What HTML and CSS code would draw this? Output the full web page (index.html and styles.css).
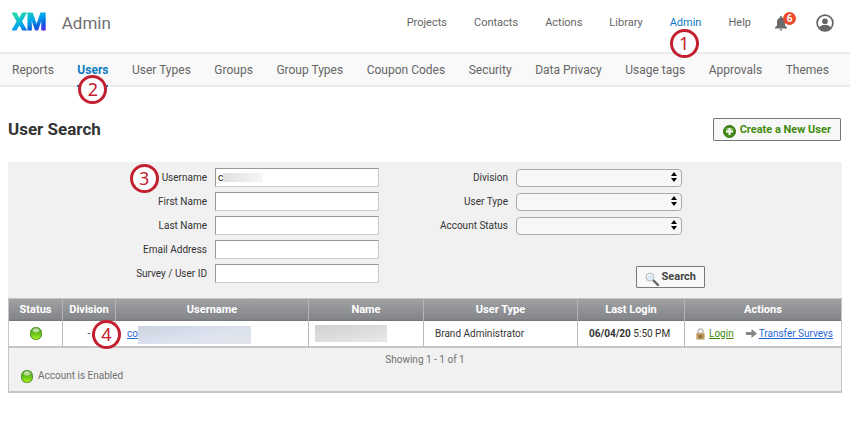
FILE: index.html
```html
<!DOCTYPE html>
<html lang="en">
<head>
<meta charset="utf-8">
<meta name="viewport" content="width=device-width, initial-scale=1">
<title>Admin - User Search</title>
<link rel="stylesheet" href="styles.css">
</head>
<body>
<svg class="defs" width="0" height="0" aria-hidden="true">
  <linearGradient id="lamp" x1="0" y1="0" x2="0" y2="1"><stop offset="0" stop-color="#8fbf70"/><stop offset=".4" stop-color="#5cb51a"/><stop offset="1" stop-color="#a6f51a"/></linearGradient>
</svg>
<header class="topbar">
  <a class="logo" href="#">XM</a>
  <span class="product">Admin</span>
  <nav class="main-nav" aria-label="Main">
    <a href="#">Projects</a>
    <a href="#">Contacts</a>
    <a href="#">Actions</a>
    <a href="#">Library</a>
    <a class="current" href="#">Admin<span class="callout callout-below">1</span></a>
    <a href="#">Help</a>
  </nav>
  <button class="icon-button bell" type="button" aria-label="Notifications">
    <svg width="12" height="15" viewBox="0 0 12 15" fill="#6b6b6b"><path d="M6 0a1 1 0 0 1 1 1v.8c2 .5 3 2 3 4v3.700l2 2V12.500H0v-1l2-2V5.800c0-2 1-3.500 3-4V1a1 1 0 0 1 1-1zM4.600 13.300h2.800a1.400 1.400 0 0 1-2.800 0z"/></svg>
    <span class="badge">6</span>
  </button>
  <button class="icon-button" type="button" aria-label="Account">
    <svg width="18" height="18" viewBox="0 0 18 18"><circle cx="9" cy="9" r="7.900" fill="#fff" stroke="#666" stroke-width="1.700"/><circle cx="9" cy="7.300" r="2.900" fill="#666"/><path d="M3 13.500c1.500-2 3.500-2.500 6-2.500s4.500.5 6 2.500A8 8 0 0 1 9 17a8 8 0 0 1-6-3.500z" fill="#666"/></svg>
  </button>
</header>
<nav class="sub-nav" aria-label="Admin">
  <a href="#">Reports</a>
  <a class="current" href="#">Users<span class="callout callout-tab">2</span></a>
  <a href="#">User Types</a>
  <a href="#">Groups</a>
  <a href="#">Group Types</a>
  <a href="#">Coupon Codes</a>
  <a href="#">Security</a>
  <a href="#">Data Privacy</a>
  <a href="#">Usage tags</a>
  <a href="#">Approvals</a>
  <a href="#">Themes</a>
</nav>
<main>
  <div class="title-row">
    <h1>User Search</h1>
    <button class="btn create" type="button">
      <svg width="13" height="13" viewBox="0 0 13 13"><circle cx="6.500" cy="6.500" r="6" fill="#458b1b" stroke="#32700f"/><path d="M2 5a5 4 0 0 1 9 0z" fill="#8abd65"/><path d="M6.500 3v7M3 6.500h7" stroke="#fff" stroke-width="2"/></svg>
      Create a New User
    </button>
  </div>
  <form class="search">
    <div class="fields">
      <label for="username"><span class="callout callout-before">3</span>Username</label>
      <div class="masked"><input id="username" type="text" value="c"><span class="mask mask-input"></span></div>
      <label for="first">First Name</label><input id="first" type="text">
      <label for="last">Last Name</label><input id="last" type="text">
      <label for="email">Email Address</label><input id="email" type="text">
      <label for="userid">Survey / User ID</label><input id="userid" type="text">
    </div>
    <div class="filters">
      <label for="division">Division</label>
      <div class="pick"><select id="division"><option></option></select><svg width="6" height="10" viewBox="0 0 6 10"><path d="M3 0l3 4H0zM3 10l3-4H0z"/></svg></div>
      <label for="type">User Type</label>
      <div class="pick"><select id="type"><option></option></select><svg width="6" height="10" viewBox="0 0 6 10"><path d="M3 0l3 4H0zM3 10l3-4H0z"/></svg></div>
      <label for="status">Account Status</label>
      <div class="pick"><select id="status"><option></option></select><svg width="6" height="10" viewBox="0 0 6 10"><path d="M3 0l3 4H0zM3 10l3-4H0z"/></svg></div>
      <button class="btn find" type="submit">
        <svg width="14" height="14" viewBox="0 0 14 14"><path d="M8 8l5 5" stroke="#666" stroke-width="2.400" stroke-linecap="round"/><circle cx="5" cy="5" r="4" fill="#dce9fa" stroke="#bbb"/><path d="M2.500 5a2.500 2.500 0 0 1 3-2.500" fill="none" stroke="#fff"/></svg>
        Search
      </button>
    </div>
  </form>
  <div class="results">
    <table>
      <colgroup><col class="c-status"><col class="c-division"><col class="c-username"><col class="c-name"><col class="c-type"><col class="c-login"><col class="c-actions"></colgroup>
      <thead><tr><th>Status</th><th>Division</th><th>Username</th><th>Name</th><th>User Type</th><th>Last Login</th><th>Actions</th></tr></thead>
      <tbody><tr>
        <td class="center"><svg class="lamp" width="12" height="13" viewBox="0 0 12 13"><rect x=".5" y=".5" width="11" height="12" rx="5" fill="url(#lamp)" stroke="#4a8d25"/><ellipse cx="6" cy="3.500" rx="3" ry="2" fill="#cfeab8" opacity=".8"/></svg></td>
        <td class="center">-<span class="callout callout-cell">4</span></td>
        <td><div class="redacted"><a href="#">co</a><span class="mask mask-user"></span></div></td>
        <td><span class="mask mask-name"></span></td>
        <td>Brand Administrator</td>
        <td><b>06/04/20</b> 5:50 PM</td>
        <td><div class="actions">
          <svg width="9" height="12" viewBox="0 0 9 12"><path d="M2 6V3.500a2.500 2.500 0 0 1 5 0V6" fill="none" stroke="#bbb" stroke-width="1.500"/><rect x=".5" y="5" width="8" height="6.500" rx="1" fill="#b9965c" stroke="#d3c4a6"/><path d="M3 7h3v3H3z" fill="#94713b"/></svg>
          <a class="login" href="#">Login</a>
          <svg class="arrow" width="11" height="9" viewBox="0 0 11 9"><path d="M0 3h5.500V0L11 4.500 5.500 9V6H0z" fill="#858585"/></svg>
          <a href="#">Transfer Surveys</a>
        </div></td>
      </tr></tbody>
    </table>
    <p class="count">Showing 1 - 1 of 1</p>
    <p class="legend"><svg width="12" height="13" viewBox="0 0 12 13"><rect x=".5" y=".5" width="11" height="12" rx="5" fill="url(#lamp)" stroke="#4a8d25"/><ellipse cx="6" cy="3.500" rx="3" ry="2" fill="#cfeab8" opacity=".8"/></svg>Account is Enabled</p>
  </div>
</main>
</body>
</html>
```

FILE: styles.css
```css
* { box-sizing: border-box; }
body { margin: 0; background: #fff; color: #333; font: 10px/14px Roboto, "Liberation Sans", sans-serif; }
a { color: #2a69d4; }
button, input, select { font: inherit; margin: 0; }
svg { display: block; flex: none; }
h1, p { margin: 0; }
.defs { position: absolute; }

.topbar { display: flex; align-items: center; height: 54px; padding: 0 16px 6px 12px; border-bottom: 2px solid #ebebeb; }
.logo { font-size: 23px; line-height: 24px; font-weight: 700; -webkit-text-stroke: 1px transparent; text-decoration: none; color: transparent; background: linear-gradient(155deg, #21dbaa 15%, #00a8ed 45%, #0768dd 65%, #6515e8 90%); background-clip: text; -webkit-background-clip: text; }
.product { margin-left: 15px; font-size: 17px; line-height: 24px; color: #707070; }
.main-nav { display: flex; gap: 27px; margin-left: auto; font-size: 11px; }
.main-nav a, .sub-nav a { position: relative; color: #666; text-decoration: none; white-space: nowrap; }
.main-nav .current, .sub-nav .current { color: #0b79bf; }
.icon-button { position: relative; padding: 0; border: 0; background: none; }
.bell { margin: 0 29px 0 24px; }
.badge { position: absolute; left: 8px; top: -4px; width: 13px; height: 13px; border-radius: 50%; background: #ed4b2c; color: #fff; font-size: 10px; line-height: 13px; font-weight: 700; text-align: center; }

.sub-nav { display: flex; justify-content: space-between; height: 33px; padding: 0 21px 0 12px; background: #f9f9f9; border-bottom: 2px solid #ebebeb; font-size: 12px; line-height: 32px; }
.sub-nav .current { height: 33px; border-bottom: 2px solid #0b79bf; font-weight: 700; }

.callout { position: absolute; z-index: 1; width: 29px; height: 29px; border: 3px solid #c3202f; border-radius: 50%; background: #fff; color: #c3202f; font: 18px/23px "Noto Sans", sans-serif; text-align: center; }
.callout-below { left: 0; top: 13px; }
.callout-tab { left: 1px; top: 21px; }
.callout-before { right: 100%; top: -7px; margin-right: 3px; }
.callout-cell { right: -6px; top: -1px; }

main { padding: 0 8px; }
.title-row { display: flex; justify-content: space-between; align-items: center; height: 75px; padding: 10px 1px 0 0; }
h1 { font-size: 17px; line-height: 22px; margin-top: -2px; }
.btn { display: flex; align-items: center; border: 1px solid #777; border-radius: 1px; background: #f8f8f8; font-size: 11px; font-weight: 700; color: #444; white-space: nowrap; }
.btn svg { position: relative; top: 2px; }
.create { height: 23px; padding: 0 9px; gap: 4px; color: #418a0c; }

.search { display: grid; grid-template-columns: 371px 1fr; height: 136px; padding-top: 6px; background: #f1f1f1; }
.fields, .filters { display: grid; grid-auto-rows: 19px; align-content: start; gap: 5px 8px; align-items: center; text-align: right; }
.fields { grid-template-columns: 199px 164px; }
.filters { grid-template-columns: 129px 166px; }
.fields label { position: relative; justify-self: end; }
.masked, .redacted, .pick { position: relative; }
input { display: block; width: 100%; height: 19px; padding: 0 2px; border: 1px solid #ccc; border-top-color: #999; border-left-color: #999; background: #fff; color: #222; }
select { display: block; width: 100%; height: 18px; border: 1px solid #aaa; border-radius: 4px; background: #f7f7f7; appearance: none; }
.pick svg { position: absolute; right: 5px; top: 3px; pointer-events: none; }
.find { grid-column: 2; grid-row: 5; justify-self: end; height: 22px; padding: 0 8px; gap: 3px; margin: 6px -23px 0 0; }

.mask { display: block; }
.mask-input { position: absolute; left: 8px; top: 5px; width: 40px; height: 9px; background: linear-gradient(90deg, #e0e0e0, #f6f6f6); }
.mask-user { position: absolute; left: 11px; top: -1px; width: 113px; height: 18px; background: linear-gradient(170deg, #cbd3df, #dee3f0 60%, #e3e4e8); }
.mask-name { width: 72px; height: 17px; margin-left: -5px; background: linear-gradient(170deg, #d0d0d0, #e9e9e9); }

.results { border: solid #c6c6c6; border-width: 1px 1px 2px; background: #f1f1f1; color: #707070; }
table { width: 100%; border-collapse: separate; border-spacing: 0; table-layout: fixed; color: #333; }
.c-status { width: 54px; }
.c-division { width: 53px; }
.c-username { width: 193px; }
.c-name { width: 115px; }
.c-type { width: 154px; }
.c-login { width: 107px; }
th { height: 22px; padding: 0; border-right: 1px solid #b5b5b5; background: linear-gradient(#a0a1a3, #858689 90%, #747578); color: #fff; font-size: 11px; }
td { position: relative; height: 27px; padding: 0 0 0 11px; border-right: 1px solid #bbb; border-bottom: 2px solid #c6c6c6; background: #fff; white-space: nowrap; }
th:last-child, td:last-child { border-right: 0; }
.center { padding: 0; text-align: center; }
.lamp { margin: auto; }
.actions { display: flex; align-items: center; gap: 4px; }
.login { color: #418a0c; }
.arrow { margin-left: 8px; }
.actions a:last-child { margin-left: -2px; }
.count { padding: 5px 0 2px; text-align: center; }
.legend { display: flex; align-items: center; gap: 5px; padding: 0 12px 8px; }
```
